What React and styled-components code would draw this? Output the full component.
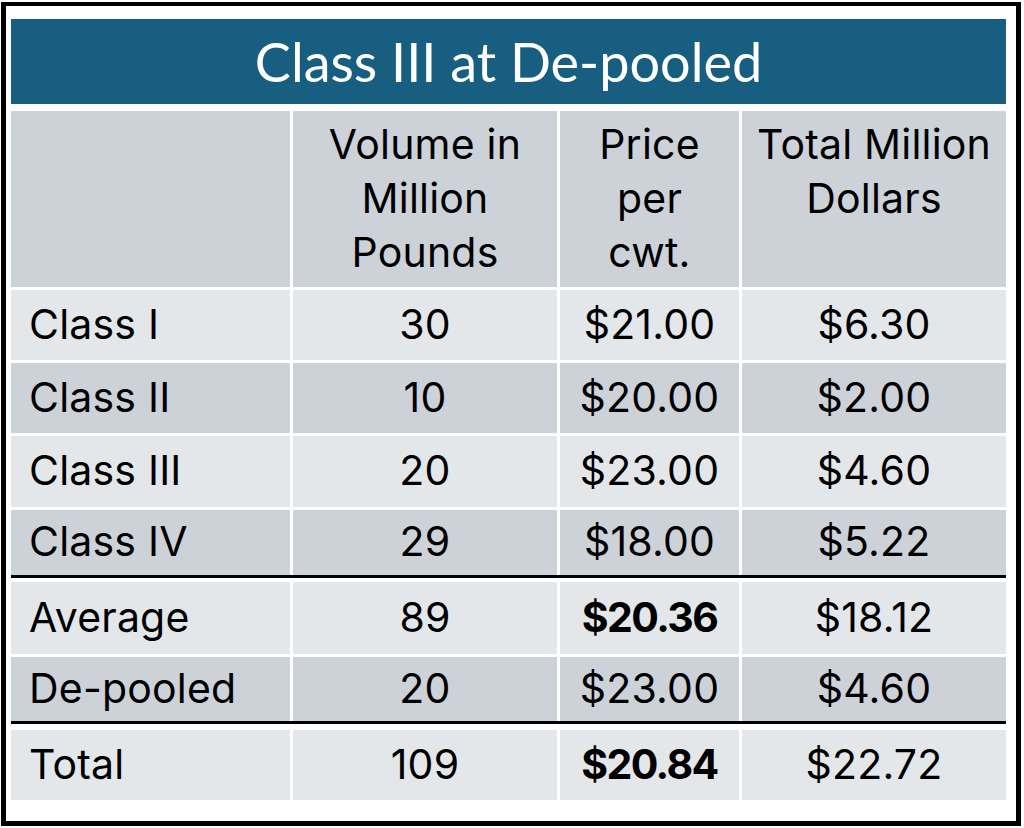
import React from 'react';
import styled, { createGlobalStyle } from 'styled-components';

const GlobalStyle = createGlobalStyle`
  html, body {
    margin: 0;
    padding: 0;
    background: #ffffff;
  }
`;

const Frame = styled.div`
  box-sizing: border-box;
  width: 1020px;
  height: 824px;
  margin: 2px 0 0 1px;
  border: 5px solid #000;
  border-top-width: 4px;
  padding: 13px 10px 0 5px;
  background: #fff;
  font-family: Inter, "Liberation Sans", sans-serif;
  color: #000;
`;

const Board = styled.div`
  display: flex;
  flex-direction: column;
  gap: 3px;
  width: 995px;
`;

const Title = styled.div`
  height: 85px;
  margin-bottom: 4px;
  background: #175e80;
  color: #fff;
  font-family: Lato, "Open Sans", sans-serif;
  font-size: 54px;
  display: flex;
  align-items: center;
  justify-content: center;
`;

const Row = styled.div`
  display: grid;
  grid-template-columns: 279px 264px 179px 264px;
  gap: 3px;
  height: ${p => p.h}px;
`;

const Cell = styled.div`
  background: ${p => (p.dark ? '#cdd2d9' : '#e4e7ea')};
  display: flex;
  align-items: ${p => (p.top ? 'flex-start' : 'center')};
  justify-content: ${p => (p.left ? 'flex-start' : 'center')};
  padding: ${p => (p.left ? '0 0 3px 18px' : p.top ? '6px 0 0' : '0 0 3px')};
  font-size: 41px;
  letter-spacing: ${p => (p.bold ? '-1.6px' : '0.2px')};
  line-height: 54px;
  font-weight: ${p => (p.bold ? 700 : 400)};
  text-align: center;
`;

const Rule = styled.div`
  height: 3px;
  background: #000;
  margin: -3px 0 1px;
`;

const rows = [
  { label: 'Class I', vol: '30', price: '$21.00', total: '$6.30', h: 70 },
  { label: 'Class II', vol: '10', price: '$20.00', total: '$2.00', h: 70, dark: true },
  { label: 'Class III', vol: '20', price: '$23.00', total: '$4.60', h: 71 },
  { label: 'Class IV', vol: '29', price: '$18.00', total: '$5.22', h: 65, dark: true, rule: true },
  { label: 'Average', vol: '89', price: '$20.36', total: '$18.12', h: 72, bold: true },
  { label: 'De-pooled', vol: '20', price: '$23.00', total: '$4.60', h: 64, dark: true, rule: true, after: 3 },
  { label: 'Total', vol: '109', price: '$20.84', total: '$22.72', h: 70, bold: true },
];

const App = () => {
  return (
    <>
      <GlobalStyle />
      <Frame>
        <Board>
          <Title>Class III at De-pooled</Title>
          <Row h={176}>
            <Cell dark />
            <Cell dark top>Volume in<br />Million<br />Pounds</Cell>
            <Cell dark top>Price<br />per<br />cwt.</Cell>
            <Cell dark top>Total Million<br />Dollars</Cell>
          </Row>
          {rows.map(r => (
            <React.Fragment key={r.label}>
              <Row h={r.h}>
                <Cell dark={r.dark} left>{r.label}</Cell>
                <Cell dark={r.dark}>{r.vol}</Cell>
                <Cell dark={r.dark} bold={r.bold}>{r.price}</Cell>
                <Cell dark={r.dark}>{r.total}</Cell>
              </Row>
              {r.rule && <Rule style={r.after ? { marginBottom: r.after } : undefined} />}
            </React.Fragment>
          ))}
        </Board>
      </Frame>
    </>
  );
};

export default App;
